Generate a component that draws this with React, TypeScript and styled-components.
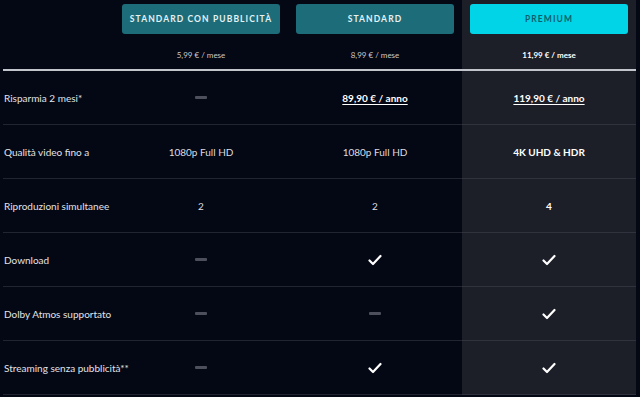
import * as React from 'react';
import styled, { createGlobalStyle } from 'styled-components';

const GlobalStyle = createGlobalStyle`
  html, body {
    margin: 0;
    padding: 0;
    background: #040714;
  }
  body {
    font-family: Lato, "Noto Sans", "Liberation Sans", sans-serif;
    color: #f9f9f9;
  }
`;

const Table = styled.div`
  display: grid;
  grid-template-columns: 111px repeat(3, 174px);
  grid-template-rows: 71px repeat(6, 54px);
  align-content: start;
  margin-left: 3px;
  width: 633px;
`;

const HeadCell = styled.div<{ $premium?: boolean }>`
  display: flex;
  flex-direction: column;
  align-items: center;
  padding-top: 4px;
  box-sizing: border-box;
  border-bottom: 2px solid #c3c5cc;
  background: ${p => (p.$premium ? '#1c1e28' : 'transparent')};
`;

const PlanButton = styled.div<{ $premium?: boolean }>`
  width: 158px;
  height: 30px;
  border-radius: 3px;
  display: flex;
  align-items: center;
  justify-content: center;
  font-size: 8.5px;
  font-weight: 700;
  letter-spacing: 1.1px;
  text-transform: uppercase;
  white-space: nowrap;
  background: ${p => (p.$premium ? '#02d4e8' : '#1c6c7a')};
  color: ${p => (p.$premium ? '#0d5f6d' : '#e6f2f4')};
`;

const Price = styled.div<{ $premium?: boolean }>`
  margin-top: 16px;
  font-size: 8px;
  color: ${p => (p.$premium ? '#ffffff' : '#c9cace')};
  font-weight: ${p => (p.$premium ? 700 : 400)};
`;

const Cell = styled.div<{ $premium?: boolean; $label?: boolean }>`
  display: flex;
  align-items: center;
  justify-content: ${p => (p.$label ? 'flex-start' : 'center')};
  padding-left: ${p => (p.$label ? '1px' : '0')};
  box-sizing: border-box;
  border-bottom: 1px solid ${p => (p.$premium ? '#30333e' : '#22252f')};
  background: ${p => (p.$premium ? '#1c1e28' : 'transparent')};
  font-size: 10px;
  color: ${p => (p.$premium ? '#ffffff' : p.$label ? '#e2e3e6' : '#dcdde1')};
  font-weight: ${p => (p.$premium ? 700 : 400)};
  white-space: nowrap;
`;

const Yearly = styled.span`
  font-size: 10px;
  font-weight: 700;
  color: #ffffff;
  text-decoration: underline;
  text-underline-offset: 2px;
`;

const Dash = styled.span`
  display: block;
  width: 12px;
  height: 3px;
  border-radius: 1px;
  background: #4d505c;
`;

const Check = () => (
  <svg width="14" height="12" viewBox="0 0 14 12">
    <polyline
      points="1.5,6.5 5,10 12.5,2"
      fill="none"
      stroke="#ffffff"
      strokeWidth="2.2"
      strokeLinecap="round"
      strokeLinejoin="round"
    />
  </svg>
);

const plans = [
  { name: 'Standard con pubblicità', price: '5,99 € / mese' },
  { name: 'Standard', price: '8,99 € / mese' },
  { name: 'Premium', price: '11,99 € / mese', premium: true },
];

const rows: { label: string; values: React.ReactNode[] }[] = [
  { label: 'Risparmia 2 mesi*', values: [<Dash />, <Yearly>89,90 € / anno</Yearly>, <Yearly>119,90 € / anno</Yearly>] },
  { label: 'Qualità video fino a', values: ['1080p Full HD', '1080p Full HD', '4K UHD & HDR'] },
  { label: 'Riproduzioni simultanee', values: ['2', '2', '4'] },
  { label: 'Download', values: [<Dash />, <Check />, <Check />] },
  { label: 'Dolby Atmos supportato', values: [<Dash />, <Dash />, <Check />] },
  { label: 'Streaming senza pubblicità**', values: [<Dash />, <Check />, <Check />] },
];

export default function App() {
  return (
    <>
      <GlobalStyle />
      <Table>
        <HeadCell />
        {plans.map(plan => (
          <HeadCell key={plan.name} $premium={plan.premium}>
            <PlanButton $premium={plan.premium}>{plan.name}</PlanButton>
            <Price $premium={plan.premium}>{plan.price}</Price>
          </HeadCell>
        ))}
        {rows.map(row => (
          <React.Fragment key={row.label}>
            <Cell $label>{row.label}</Cell>
            {row.values.map((v, i) => (
              <Cell key={i} $premium={i === 2}>
                {v}
              </Cell>
            ))}
          </React.Fragment>
        ))}
      </Table>
    </>
  );
}
